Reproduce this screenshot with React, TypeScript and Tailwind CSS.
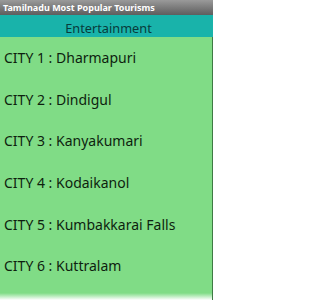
import React from 'react';

const cities = ['Dharmapuri', 'Dindigul', 'Kanyakumari', 'Kodaikanol', 'Kumbakkarai Falls', 'Kuttralam'];

const App = () => {
  return (
    <div className="w-[213px] h-[300px] overflow-hidden bg-[#80dc86] flex flex-col" style={{ fontFamily: '"Noto Sans", "Open Sans", sans-serif' }}>
      {/* title bar */}
      <div className="h-[15px] shrink-0 bg-gradient-to-b from-[#9a9a9a] to-[#5e5e5e] flex items-center px-[3px]">
        <span className="text-[9px] font-bold text-white leading-none">Tamilnadu Most Popular Tourisms</span>
      </div>
      {/* section header */}
      <div className="h-[22px] shrink-0 bg-[#19b3aa] flex items-center justify-center pt-[5px] pl-[4px]">
        <span className="text-[12.75px] text-[#083b3b] leading-none">Entertainment</span>
      </div>
      <div className="flex-1 flex border-r border-[#3e7a44] relative">
        <ul className="flex-1">
          {cities.map((c, i) => (
            <li key={c} className="h-[41.6px] flex items-center pl-[4px] text-[14px] text-[#0e1f0f]">
              CITY {i + 1} : {c}
            </li>
          ))}
        </ul>
        <div className="absolute left-0 right-0 bottom-0 h-[7px] bg-gradient-to-b from-transparent to-white" />
      </div>
    </div>
  );
};

export default App;
